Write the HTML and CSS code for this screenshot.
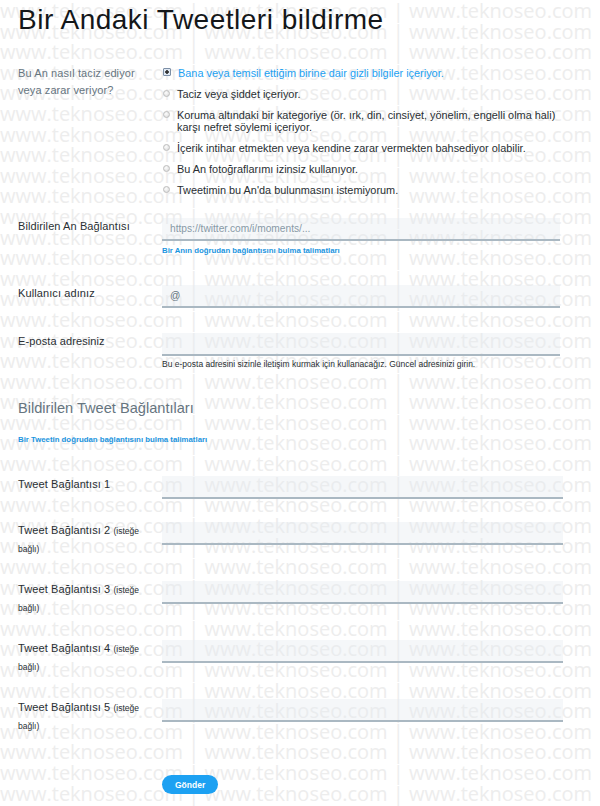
FILE: index.html
```html
<!DOCTYPE html>
<html lang="tr">
<head>
  <meta charset="UTF-8">
  <meta name="viewport" content="width=device-width, initial-scale=1.0">
  <title>Bir Andaki Tweetleri bildirme</title>
  <link rel="stylesheet" href="styles.css">
</head>
<body>
  <div id="page">
    <div class="watermark" id="watermark" aria-hidden="true"></div>

    <h1 class="title">Bir Andaki Tweetleri bildirme</h1>

    <div class="row reason-row">
      <div class="label">Bu An nasıl taciz ediyor veya zarar veriyor?</div>
      <div class="options">
        <label class="option selected"><input type="radio" name="reason" checked><span>Bana veya temsil ettiğim birine dair gizli bilgiler içeriyor.</span></label>
        <label class="option"><input type="radio" name="reason"><span>Taciz veya şiddet içeriyor.</span></label>
        <label class="option"><input type="radio" name="reason"><span>Koruma altındaki bir kategoriye (ör. ırk, din, cinsiyet, yönelim, engelli olma hali) karşı nefret söylemi içeriyor.</span></label>
        <label class="option"><input type="radio" name="reason"><span>İçerik intihar etmekten veya kendine zarar vermekten bahsediyor olabilir.</span></label>
        <label class="option"><input type="radio" name="reason"><span>Bu An fotoğraflarımı izinsiz kullanıyor.</span></label>
        <label class="option"><input type="radio" name="reason"><span>Tweetimin bu An'da bulunmasını istemiyorum.</span></label>
      </div>
    </div>

    <div class="row moment-row">
      <div class="label">Bildirilen An Bağlantısı</div>
      <div class="field">
        <input class="text-input" type="text" placeholder="https://twitter.com/i/moments/...">
        <a class="help-link" href="#">Bir Anın doğrudan bağlantısını bulma talimatları</a>
      </div>
    </div>

    <div class="row user-row">
      <div class="label">Kullanıcı adınız</div>
      <div class="field">
        <input class="text-input" type="text" value="@">
      </div>
    </div>

    <div class="row email-row">
      <div class="label">E-posta adresiniz</div>
      <div class="field">
        <input class="text-input" type="email">
        <p class="help-text">Bu e-posta adresini sizinle iletişim kurmak için kullanacağız. Güncel adresinizi girin.</p>
      </div>
    </div>

    <h2 class="section-title">Bildirilen Tweet Bağlantıları</h2>
    <a class="help-link section-help" href="#">Bir Tweetin doğrudan bağlantısını bulma talimatları</a>

    <div class="tweet-links">
      <div class="row tweet-row">
        <div class="label">Tweet Bağlantısı 1</div>
        <input class="text-input wide" type="text">
      </div>
      <div class="row tweet-row">
        <div class="label">Tweet Bağlantısı 2 <small>(isteğe bağlı)</small></div>
        <input class="text-input wide" type="text">
      </div>
      <div class="row tweet-row">
        <div class="label">Tweet Bağlantısı 3 <small>(isteğe bağlı)</small></div>
        <input class="text-input wide" type="text">
      </div>
      <div class="row tweet-row">
        <div class="label">Tweet Bağlantısı 4 <small>(isteğe bağlı)</small></div>
        <input class="text-input wide" type="text">
      </div>
      <div class="row tweet-row">
        <div class="label">Tweet Bağlantısı 5 <small>(isteğe bağlı)</small></div>
        <input class="text-input wide" type="text">
      </div>
    </div>

    <div class="actions">
      <button class="submit" type="submit">Gönder</button>
    </div>
  </div>

  <script>
    // fill the stamp layer with repeated site lines
    const watermark = document.getElementById('watermark');
    const line = 'www.teknoseo.com | www.teknoseo.com | www.teknoseo.com';
    for (let i = 0; i < 40; i++) {
      const row = document.createElement('div');
      row.className = 'watermark-line';
      row.textContent = line;
      watermark.appendChild(row);
    }
  </script>
</body>
</html>
```

FILE: styles.css
```css
body {
  margin: 0;
  background: #fff;
  font-family: 'Liberation Sans', Arial, sans-serif;
  color: #14171a;
}

#page {
  position: relative;
  z-index: 0;
  height: 806px;
  padding: 3px 0 0 18px;
  box-sizing: border-box;
  overflow: hidden;
}

.watermark {
  position: absolute;
  top: 0;
  left: 0;
  right: 0;
  bottom: 0;
  z-index: -1;
  padding-top: 1px;
  pointer-events: none;
  font-family: 'Open Sans', sans-serif;
  font-size: 20px;
  line-height: 20.6px;
  color: #ededed;
  white-space: nowrap;
}

.title {
  margin: 0;
  font-size: 28px;
  font-weight: normal;
  line-height: 34px;
  letter-spacing: 0.5px;
}

.row {
  display: grid;
  grid-template-columns: 144px 398px;
  align-items: start;
}

.label {
  font-size: 11px;
  line-height: 17px;
  letter-spacing: 0.1px;
  color: #292f33;
}

.label small {
  font-size: 8.5px;
  letter-spacing: 0;
}

.reason-row {
  margin-top: 28px;
}

.reason-row .label {
  width: 130px;
  color: #66757f;
}

.options {
  display: flex;
  flex-direction: column;
  gap: 9px;
  padding-top: 2px;
}

.option {
  display: flex;
  align-items: flex-start;
  gap: 7px;
  font-size: 10.9px;
  line-height: 12px;
  color: #292f33;
}

.option.selected {
  color: #1da1f2;
}

.option input {
  appearance: none;
  -webkit-appearance: none;
  flex: none;
  width: 7px;
  height: 7px;
  margin: 2px 0 0 1px;
  border: 1px solid #bdbdbd;
  border-radius: 50%;
  background: radial-gradient(circle at 40% 35%, #fdfdfd, #d6d6d6);
}

.option input:checked {
  width: 8px;
  height: 8px;
  margin-top: 1px;
  border-radius: 1px;
  border-color: #7d8fa6;
  background: radial-gradient(circle, #333 0 1.5px, #dfe8f3 2px);
}

.text-input {
  display: block;
  width: 100%;
  height: 23px;
  box-sizing: border-box;
  margin: 0;
  padding: 0 8px;
  border: none;
  border-bottom: 2px solid #aab8c2;
  background: rgba(230, 236, 240, 0.4);
  font-family: inherit;
  font-size: 10.2px;
  color: #66757f;
  outline: none;
}

.text-input::placeholder {
  color: #8899a6;
}

.wide {
  width: 401px;
}

.moment-row {
  margin-top: 22px;
}

.help-link {
  display: block;
  margin-top: 5px;
  font-size: 7.8px;
  line-height: 10px;
  font-weight: bold;
  color: #1b95e0;
  text-decoration: none;
}

.user-row {
  margin-top: 29px;
}

.email-row {
  margin-top: 25px;
}

.help-text {
  margin: 3px 0 0;
  font-size: 8.5px;
  line-height: 10px;
  color: #292f33;
}

.section-title {
  margin: 29px 0 0;
  font-size: 14.6px;
  line-height: 20px;
  font-weight: normal;
  color: #66757f;
}

.section-help {
  margin-top: 17px;
}

.tweet-links {
  display: flex;
  flex-direction: column;
  gap: 23px;
  margin-top: 31px;
}

.tweet-row .label {
  width: 136px;
}

.actions {
  margin: 40px 0 0 144px;
}

.submit {
  display: block;
  height: 19px;
  padding: 0 13px;
  border: none;
  border-radius: 10px;
  background: #1da1f2;
  color: #fff;
  font-family: inherit;
  font-size: 8.5px;
  font-weight: bold;
}
```
